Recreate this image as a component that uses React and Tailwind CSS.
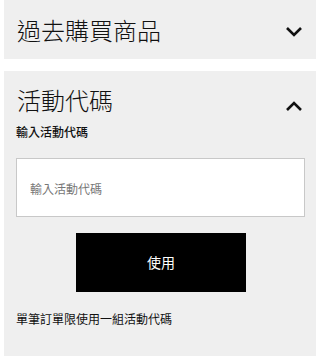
import { useState } from "react"

const Chevron = ({ up }) => (
  <svg width="18" height="12" viewBox="0 0 18 12" className="block">
    <path
      d={up ? "M2 10 L9 3 L16 10" : "M2 3 L9 10 L16 3"}
      fill="none"
      stroke="#111"
      strokeWidth="2.6"
    />
  </svg>
)

export default function App() {
  const [code, setCode] = useState("")

  return (
    <div
      className="w-[320px] h-[359px] bg-white px-1 text-[#111]"
      style={{ fontFamily: '"Noto Sans CJK TC", "Noto Sans", sans-serif' }}
    >
      <div className="h-[59px] bg-[#efefef] flex items-center justify-between pl-[13px] pr-[13px]">
        <span className="text-[24px] leading-none font-light">過去購買商品</span>
        <span className="mt-[2px]"><Chevron /></span>
      </div>

      <div className="mt-[12px] h-[285px] bg-[#efefef] pl-3 pr-[11px] pt-[17px]">
        <div className="flex items-center justify-between pl-[1px] pr-[2px]">
          <span className="text-[24px] leading-none font-light">活動代碼</span>
          <span className="mt-[12px]"><Chevron up /></span>
        </div>
        <div className="mt-[14px] text-[12px] leading-none font-medium">輸入活動代碼</div>
        <input
          value={code}
          onChange={e => setCode(e.target.value)}
          placeholder="輸入活動代碼"
          className="mt-[20px] block w-[289px] h-[59px] bg-white border border-[#c8c8c8] px-[13px] pt-[1px] text-[12px] placeholder:text-[#777] outline-none"
        />
        <button className="mt-[16px] ml-[60px] block w-[170px] h-[59px] bg-black text-white text-[14px]">
          使用
        </button>
        <div className="mt-[21px] text-[12px] leading-none">單筆訂單限使用一組活動代碼</div>
      </div>
    </div>
  )
}
